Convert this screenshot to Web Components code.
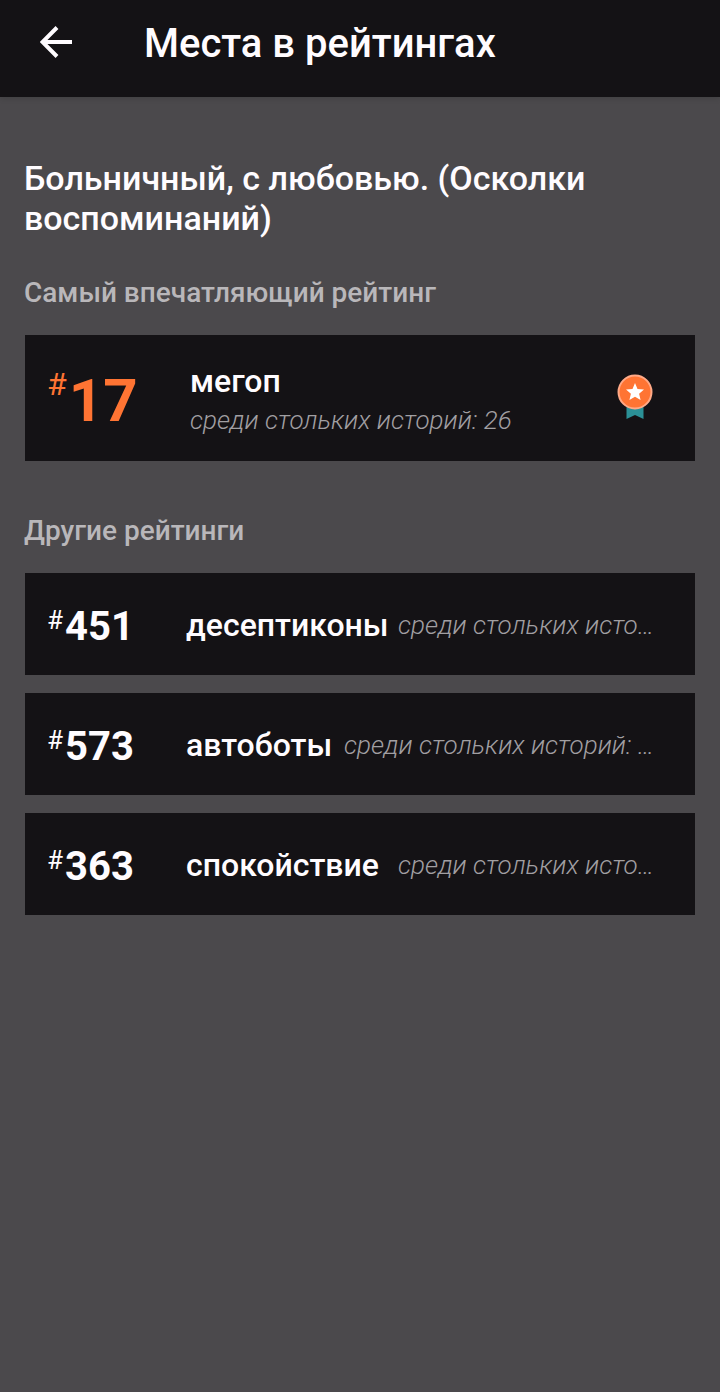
<!DOCTYPE html>
<html lang="ru">
<head>
<meta charset="utf-8">
<meta name="viewport" content="width=device-width, initial-scale=1">
<title>Места в рейтингах</title>
<style>
  body {
    margin: 0;
    min-height: 100vh;
    background: #4b494c;
    color: #fffcff;
    font-family: Roboto, "Liberation Sans", sans-serif;
  }
</style>
</head>
<body>
<ranking-page>
  <app-bar slot="bar">Места в рейтингах</app-bar>
  <span slot="story">Больничный, с любовью. (Осколки воспоминаний)</span>
  <ranking-section>
    <span slot="title">Самый впечатляющий рейтинг</span>
    <ranking-card rank="17" best>
      <span slot="tag">мегоп</span>
      <span slot="total">среди стольких историй: 26</span>
    </ranking-card>
  </ranking-section>
  <ranking-section>
    <span slot="title">Другие рейтинги</span>
    <ranking-card rank="451">
      <span slot="tag">десептиконы</span>
      <span slot="total">среди стольких исто…</span>
    </ranking-card>
    <ranking-card rank="573">
      <span slot="tag">автоботы</span>
      <span slot="total">среди стольких историй: …</span>
    </ranking-card>
    <ranking-card rank="363">
      <span slot="tag">спокойствие</span>
      <span slot="total">среди стольких исто…</span>
    </ranking-card>
  </ranking-section>
</ranking-page>

<script>
class AppBar extends HTMLElement {
  constructor() {
    super();
    this.attachShadow({ mode: "open" });
    this.shadowRoot.innerHTML = `
      <style>
        :host {
          display: block;
          background: #141215;
          box-shadow: 0 1px 6px rgba(0, 0, 0, 0.15);
        }
        header {
          display: flex;
          align-items: center;
          gap: 56px;
          padding: 18px 24px 27px 24px;
        }
        button {
          display: flex;
          align-items: center;
          justify-content: center;
          width: 64px;
          height: 48px;
          padding: 0;
          border: 0;
          background: none;
          color: inherit;
          cursor: pointer;
        }
        h1 {
          margin: 0;
          font-size: 40px;
          font-weight: 500;
          line-height: 52px;
        }
      </style>
      <header>
        <button type="button" aria-label="Назад">
          <svg width="32" height="36" viewBox="0 0 32 36" fill="none" stroke="currentColor" stroke-width="4">
            <path d="M32 16H3M17 1.5L2.500 16L17 30.500"/>
          </svg>
        </button>
        <h1><slot></slot></h1>
      </header>
    `;
  }
}

class RankingPage extends HTMLElement {
  constructor() {
    super();
    this.attachShadow({ mode: "open" });
    this.shadowRoot.innerHTML = `
      <style>
        :host {
          display: block;
        }
        main {
          padding: 61px 24px 40px 24px;
        }
        h2 {
          margin: 0 0 39px 0;
          font-size: 34px;
          font-weight: 500;
          line-height: 40px;
        }
      </style>
      <slot name="bar"></slot>
      <main>
        <h2><slot name="story"></slot></h2>
        <slot></slot>
      </main>
    `;
  }
}

class RankingSection extends HTMLElement {
  constructor() {
    super();
    this.attachShadow({ mode: "open" });
    this.shadowRoot.innerHTML = `
      <style>
        :host {
          display: block;
          margin-bottom: 54px;
        }
        h3 {
          margin: 0 0 26px 0;
          color: #b9b7ba;
          font-size: 28px;
          font-weight: 500;
          line-height: 32px;
        }
        .cards {
          display: flex;
          flex-direction: column;
          gap: 18px;
          padding: 0 1px;
        }
      </style>
      <h3><slot name="title"></slot></h3>
      <div class="cards"><slot></slot></div>
    `;
  }
}

class RankingCard extends HTMLElement {
  constructor() {
    super();
    this.attachShadow({ mode: "open" });
    this.shadowRoot.innerHTML = `
      <style>
        :host {
          display: flex;
          align-items: center;
          min-height: 102px;
          padding: 2px 41px 0 22px;
          box-sizing: border-box;
          background: #141215;
        }
        .rank {
          display: flex;
          align-items: flex-start;
          gap: 2px;
          flex: 0 0 139px;
          padding-top: 4px;
          font-size: 40px;
          font-weight: 700;
          line-height: 48px;
        }
        .sign {
          font-size: 26px;
          font-weight: 400;
          line-height: 34px;
        }
        .info {
          display: flex;
          flex: 1;
          align-items: center;
          justify-content: space-between;
          min-width: 0;
          white-space: nowrap;
        }
        .tag {
          font-size: 32px;
          font-weight: 500;
          line-height: 40px;
        }
        .total {
          overflow: hidden;
          color: #a19fa2;
          font-size: 26px;
          font-style: italic;
          font-weight: 300;
          line-height: 36px;
          text-overflow: ellipsis;
        }
        svg {
          display: none;
          flex: none;
        }
        :host([best]) {
          min-height: 126px;
        }
        :host([best]) .rank {
          flex-basis: 143px;
          color: #ff7433;
          font-size: 60px;
          line-height: 72px;
        }
        :host([best]) .sign {
          font-size: 32px;
          line-height: 38px;
        }
        :host([best]) .info {
          flex-direction: column;
          align-items: flex-start;
          gap: 1px;
        }
        :host([best]) svg {
          display: block;
        }
      </style>
      <div class="rank"><span class="sign">#</span><span class="number"></span></div>
      <div class="info">
        <div class="tag"><slot name="tag"></slot></div>
        <div class="total"><slot name="total"></slot></div>
      </div>
      <svg width="37" height="50" viewBox="0 0 37 50" aria-hidden="true">
        <path d="M9.500 30H26.500V45L18 41L9.500 45Z" fill="#2b9096"/>
        <circle cx="18" cy="18" r="16.500" fill="#ff7433" stroke="#ffa987" stroke-width="2"/>
        <path d="M18 9L20.500 15L27 15.500L22.100 19.700L23.600 26L18 22.700L12.400 26L13.900 19.700L9 15.500L15.500 15Z" fill="#fff"/>
      </svg>
    `;
  }

  connectedCallback() {
    this.shadowRoot.querySelector(".number").textContent = this.getAttribute("rank");
  }
}

customElements.define("app-bar", AppBar);
customElements.define("ranking-page", RankingPage);
customElements.define("ranking-section", RankingSection);
customElements.define("ranking-card", RankingCard);
</script>
</body>
</html>
